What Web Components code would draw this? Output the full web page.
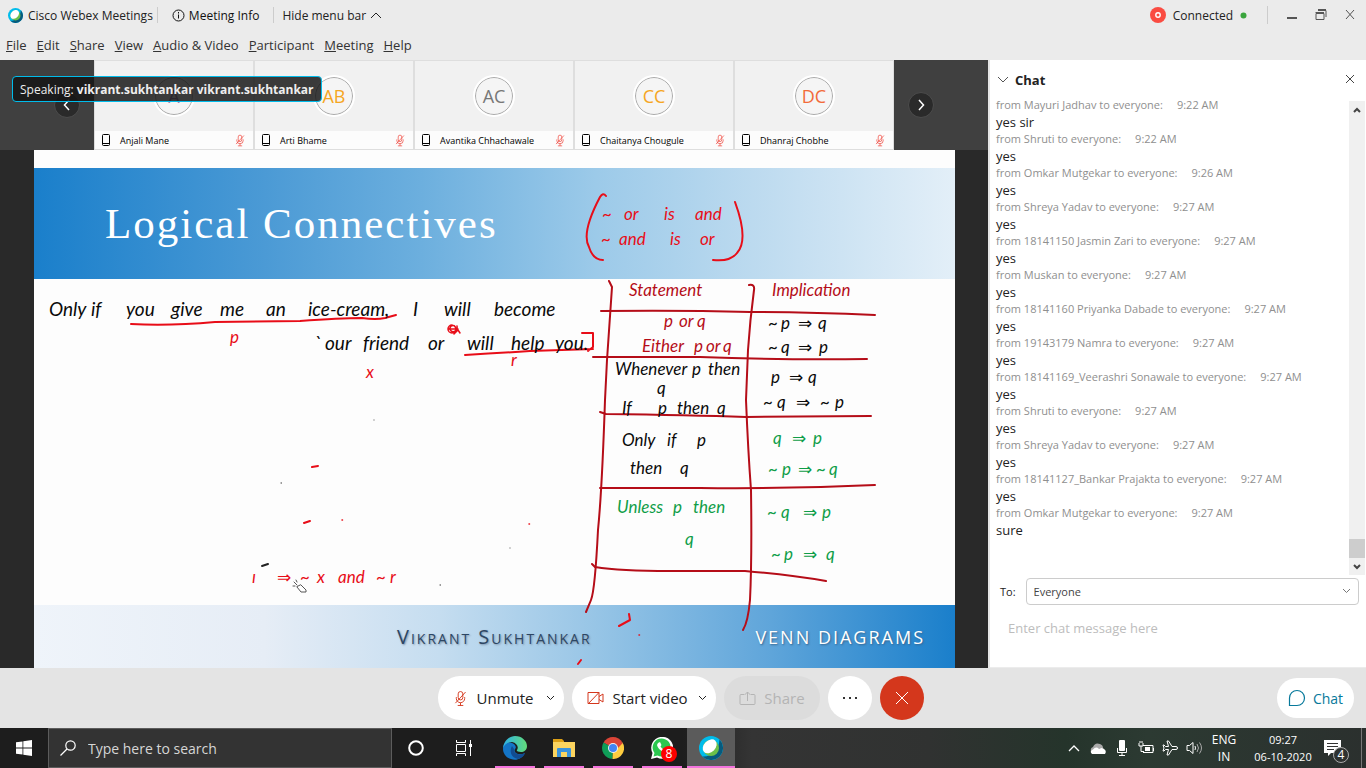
<!DOCTYPE html>
<html lang="en">
<head>
<meta charset="utf-8">
<title>Cisco Webex Meetings</title>
<style>
  html, body { height: 100%; margin: 0; }
  body { font-family: "Open Sans", "Noto Sans", sans-serif; font-size: 12px; color: #222; background: #ebebeb; overflow: hidden; }
</style>
</head>
<body>
<webex-app></webex-app>
<script>
const base = `
  *, *::before, *::after { box-sizing: border-box; }
  button { font: inherit; color: inherit; border: 0; background: none; padding: 0; margin: 0; display: flex; align-items: center; justify-content: center; }
  svg { display: block; flex: none; fill: none; }
  svg:not([stroke]) { stroke: currentColor; }
`;
function define(name, css, html) {
  const tpl = document.createElement('template');
  customElements.define(name, class extends HTMLElement {
    constructor() {
      super();
      const root = this.attachShadow({ mode: 'open' });
      tpl.innerHTML = `<style>${base}${css}</style>` + (typeof html === 'function' ? html(this) : html);
      root.append(tpl.content.cloneNode(true));
    }
  });
}
const micOff = (w, h) => `<svg width="${w}" height="${h}" viewBox="0 0 14 17" aria-hidden="true"><rect x="4.500" y="1" width="5" height="9" rx="2.500"/><path d="M2.500 7v1.500a4.500 4.500 0 0 0 9 0V7M7 13v3M4 16h6M12.500 1.500L1.500 13.500"/></svg>`;
const webexLogo = s => `<svg width="${s}" height="${s}" viewBox="0 0 24 24" stroke="none" aria-hidden="true"><circle cx="12" cy="12" r="12" fill="#00bceb"/><path d="M20.500 3.500A12 12 0 0 1 3.500 20.500C13 21 20 14 20.500 3.500z" fill="#075a7d"/><circle cx="12" cy="12" r="8" fill="#6cc04a"/><ellipse cx="10.700" cy="10.300" rx="8" ry="5.800" transform="rotate(-45 10.700 10.300)" fill="#fff"/></svg>`;

define('title-bar', `
  :host { display: flex; height: 30px; align-items: center; padding: 0 10px 0 8px; background: #ebebeb; }
  .brand, .info, .hide, .status { display: flex; align-items: center; }
  .brand { gap: 5px; padding-right: 4px; }
  .info { gap: 4px; padding: 0 14px; height: 16px; border-left: 1px solid #ccc; border-right: 1px solid #ccc; color: #111; }
  .hide { gap: 4px; padding-left: 8px; }
  .status { margin-left: auto; gap: 7px; padding-right: 20px; }
  .win { display: flex; gap: 16px; border-left: 1px solid #ccc; padding-left: 18px; height: 18px; color: #555; }
`, `
  <div class="brand">${webexLogo(15)}<span>Cisco Webex Meetings</span></div>
  <button class="info"><svg width="13" height="13" viewBox="0 0 13 13"><circle cx="6.500" cy="6.500" r="5.500"/><path d="M6.500 5.500v4M6.500 3v1.500"/></svg>Meeting Info</button>
  <button class="hide">Hide menu bar <svg width="12" height="8" viewBox="0 0 12 8"><path d="M1 7l5-5 5 5"/></svg></button>
  <div class="status"><svg width="16" height="16" viewBox="0 0 16 16" stroke="none"><circle cx="8" cy="8" r="8" fill="#fa4c42"/><circle cx="8" cy="8" r="2.200" stroke="#fff" stroke-width="1.400"/></svg><span>Connected</span><svg width="7" height="7" viewBox="0 0 7 7" stroke="none"><circle cx="3.500" cy="3.500" r="3" fill="#3aa53d"/></svg></div>
  <div class="win">
    <button aria-label="Minimize"><svg width="12" height="12" viewBox="0 0 12 12"><path d="M1 9h10" stroke-width="2"/></svg></button>
    <button aria-label="Restore"><svg width="14" height="12" viewBox="0 0 14 12"><path d="M2 4.500h8v6H2zM2 3v1h8M4 1.500h8V8"/><path d="M2 4h8M4 1h8" stroke-width="2"/></svg></button>
    <button aria-label="Close"><svg width="12" height="12" viewBox="0 0 12 12"><path d="M2 1l8 9M10 1l-8 9"/></svg></button>
  </div>`);

define('menu-bar', `
  :host { display: block; background: #ebebeb; }
  nav { height: 30px; display: flex; align-items: center; gap: 10px; padding: 0 6px; font-size: 13px; color: #333; }
`, `<nav>${['File', 'Edit', 'Share', 'View', 'Audio &amp; Video', 'Participant', 'Meeting', 'Help'].map(t => `<button><span><u>${t[0]}</u>${t.slice(1)}</span></button>`).join('')}</nav>`);

define('participant-tile', `
  :host { display: flex; flex-direction: column; width: 160px; background: #f1f1f1; border: 1px solid #dedede; }
  .face { flex: 1; display: grid; place-items: center; }
  .avatar { width: 38px; height: 38px; border-radius: 50%; border: 1px solid #aaa; outline: 2px solid #fff; background: #f5f5f5; display: grid; place-items: center; font-size: 18px; color: var(--tone); }
  .name { height: 18px; display: flex; align-items: center; gap: 9px; padding: 0 8px 0 6px; background: #fcfcfc; font-size: 9px; color: #000; }
  .mic { margin-left: auto; color: #f0483e; }
`, el => `
  <div class="face"><span class="avatar" style="--tone:${el.getAttribute('tone')}">${el.getAttribute('initials')}</span></div>
  <div class="name"><svg width="10" height="12" viewBox="0 0 10 12"><rect x="1.500" y=".5" width="7" height="11" rx="1"/><path d="M2 9.500h6"/></svg><slot></slot><span class="mic">${micOff(10, 13)}</span></div>`);

define('film-strip', `
  :host { display: flex; height: 90px; background: #404040; position: relative; }
  .side { flex: 1; display: flex; align-items: center; padding: 0 14px; color: #fff; }
  .side.prev { justify-content: flex-end; }
  .side button { width: 26px; height: 26px; border-radius: 50%; border: 1px solid #4c4c4c; background: #2a2a2a; }
  .speaking { position: absolute; left: 12px; top: 16px; height: 26px; display: flex; align-items: center; white-space: pre; padding: 0 7px; border: 1px solid #00bceb; border-radius: 4px; background: rgba(20,20,20,.83); color: #eee; }
  .speaking b { font-weight: 700; }
`, `
  <div class="side prev"><button aria-label="Previous participants"><svg width="8" height="12" viewBox="0 0 8 12"><path d="M6 1L1.500 6 6 11" stroke-width="1.500"/></svg></button></div>
  <participant-tile initials="A" tone="#a47bb0">Anjali Mane</participant-tile>
  <participant-tile initials="AB" tone="#f5a623">Arti Bhame</participant-tile>
  <participant-tile initials="AC" tone="#777">Avantika Chhachawale</participant-tile>
  <participant-tile initials="CC" tone="#f5a623">Chaitanya Chougule</participant-tile>
  <participant-tile initials="DC" tone="#f26b3a">Dhanraj Chobhe</participant-tile>
  <div class="side"><button aria-label="Next participants"><svg width="8" height="12" viewBox="0 0 8 12"><path d="M2 1l4.500 5L2 11" stroke-width="1.500"/></svg></button></div>
  <div class="speaking">Speaking: <b>vikrant.sukhtankar vikrant.sukhtankar</b></div>`);

/* A line of handwriting: [classes, baseline, x1, word1, x2, word2, ...] */
const notes = [
  ['r', 220, 602, '~', 624, 'or', 664, 'is', 695, 'and'],
  ['r', 245, 601, '~', 619, 'and', 670, 'is', 700, 'or'],
  ['k big', 316, 49, 'Only', 91, 'if', 126, 'you', 171, 'give', 220, 'me', 266, 'an', 308, 'ice-cream,', 413, 'I', 444, 'will', 494, 'become'],
  ['r', 343, 230, 'p'],
  ['k big', 350, 314, '`', 325, 'our', 363, 'friend', 428, 'or', 467, 'will', 511, 'help', 555, 'you.'],
  ['r', 366, 511, 'r'],
  ['r', 378, 366, 'x'],
  ['d', 296, 629, 'Statement', 772, 'Implication'],
  ['d', 327, 664, 'p', 679, 'or', 697, 'q'],
  ['d', 352, 642, 'Either', 694, 'p', 706, 'or', 723, 'q'],
  ['k', 329, 768, '~', 781, 'p', 798, '⇒', 818, 'q'],
  ['k', 353, 768, '~', 781, 'q', 798, '⇒', 819, 'p'],
  ['k', 375, 615, 'Whenever', 692, 'p', 708, 'then'],
  ['k', 394, 657, 'q'],
  ['k', 414, 622, 'If', 658, 'p', 677, 'then', 717, 'q'],
  ['k', 383, 771, 'p', 789, '⇒', 808, 'q'],
  ['k', 408, 763, '~', 777, 'q', 796, '⇒', 820, '~', 835, 'p'],
  ['k', 446, 622, 'Only', 667, 'if', 697, 'p'],
  ['k', 474, 630, 'then', 680, 'q'],
  ['g', 444, 773, 'q', 792, '⇒', 813, 'p'],
  ['g', 475, 768, '~', 782, 'p', 798, '⇒', 816, '~', 829, 'q'],
  ['g', 513, 617, 'Unless', 673, 'p', 693, 'then'],
  ['g', 545, 685, 'q'],
  ['g', 518, 767, '~', 781, 'q', 803, '⇒', 822, 'p'],
  ['g', 560, 771, '~', 784, 'p', 803, '⇒', 826, 'q'],
  ['r', 583, 252, 'ı', 277, '⇒', 300, '~', 317, 'x', 338, 'and', 376, '~', 390, 'r']
];
const noteText = notes.map(([c, y, ...w]) => {
  let s = '';
  for (let i = 0; i < w.length; i += 2) s += `<tspan x="${w[i]}">${w[i + 1]}</tspan> `;
  return `<text class="${c}" y="${y}">${s.trim()}</text>`;
}).join('');

define('shared-slide', `
  :host { display: flex; background: #292929; padding: 0 33px 0 34px; }
  .slide { flex: 1; position: relative; display: flex; flex-direction: column; background: #fdfdfd; padding-top: 18px; }
  header { height: 111px; display: flex; align-items: center; padding-left: 71px; background: linear-gradient(90deg, #1a7fcb 0%, #4b9ad5 25%, #6cafde 42%, #9ccae9 61%, #bcdaef 78%, #e3eff8 100%); }
  h1 { margin: 0; font: 43px "Liberation Serif", serif; letter-spacing: 2px; color: #fff; }
  footer { margin-top: auto; height: 63px; display: flex; align-items: center; padding-right: 30px; font-size: 18px; letter-spacing: 2px;
    background: linear-gradient(90deg, #eff4fa 0%, #e6edf6 25%, #c5ddf0 44%, #97c5e6 61%, #5fa5da 80%, #1a7fcb 100%); }
  .author { margin-left: 363px; font-size: 20px; font-variant: small-caps; color: #2d4663; text-shadow: 1px 1px 2px #7d93ab; }
  .topic { margin-left: auto; color: #fff; text-shadow: 1px 1px 2px #37668f; }
  .ink { position: absolute; left: 0; top: 0; width: 100%; height: 100%; stroke-width: 2; stroke-linecap: round; stroke-linejoin: round; }
  .ink text { stroke: none; font: italic 17px Lato, "DejaVu Sans", sans-serif; }
  .ink text.big { font-size: 19px; }
  text.r { fill: #e80d18; } text.k { fill: #0a0a0a; } text.d { fill: #b50d18; } text.g { fill: #0f9d48; }
`, `
  <div class="slide">
    <header><h1>Logical Connectives</h1></header>
    <footer><span class="author">Vikrant Sukhtankar</span><span class="topic">VENN DIAGRAMS</span></footer>
    <svg class="ink" viewBox="34 150 921 518" role="img" aria-label="Handwritten notes">
      <g stroke="#e80d18">
        <path d="M606 196Q603 192 600 197Q581 233 589 247Q593 260 603 260M735 202Q749 240 737 253Q730 262 713 260"/>
        <path d="M131 324Q170 326 215 322L300 321Q340 318 362 318Q376 320 385 318L396 315M465 355Q500 353 530 351L593 349M582 333h11V347L588 351"/>
        <path d="M452 325a4 4 0 1 0 4 4q-1-5-5-3q-3 4 2 6q5-2 4-6M448 329h10M454 334l4-4l2 3" stroke-width="1.500"/>
        <path d="M312 467l6-1M304 523l6-2M619 626L630 620L629 614M578 664l3-4"/>
        <path d="M342 520h.5M529 524h.5M639 635h.5" stroke-width="1.500"/>
      </g>
      <g stroke="#b50d18">
        <path d="M609 281L612 287Q609 330 607 360L605 400Q602 490 598 530Q595 590 591 600L586 612M749 285Q755 284 754 290Q750 320 748 350L746 400Q748 450 751 490Q752 560 750 600Q748 622 743 630"/>
        <path d="M601 311Q680 310 750 312Q810 312 875 315M593 357H700Q780 360 867 359M600 412L606 414Q690 415 746 417L871 416M600 488H700Q790 489 875 485M592 564l3 3Q620 571 670 571H745Q790 575 826 581"/>
      </g>
      <g stroke="#222"><path d="M262 566l6-2"/><path d="M281 483h.5M440 585h.5M510 548h0M374 420h0" stroke-width="1"/>
        <path d="M294 582l3 3M293 586h2M297 582l-1-2M297 587l4 5h5v-2l-5-5z" fill="#fff" stroke="#555" stroke-width="1"/></g>
      ${noteText}
    </svg>
  </div>`);

define('chat-message', `
  :host { display: block; }
  .from { height: 16px; line-height: 16px; font-size: 11px; color: #8f8f8f; white-space: pre; }
  .from time { margin-left: 14px; }
  .text { height: 18px; line-height: 18px; font-size: 13px; color: #222; }
`, el => `<div class="from">from ${el.getAttribute('from')} to everyone:<time>${el.getAttribute('time')}</time></div><div class="text"><slot></slot></div>`);

const log = [['Mayuri Jadhav', '9:22', 'yes sir'], ['Shruti', '9:22'], ['Omkar Mutgekar', '9:26'], ['Shreya Yadav', '9:27'], ['18141150 Jasmin Zari', '9:27'], ['Muskan', '9:27'], ['18141160 Priyanka Dabade', '9:27'], ['19143179 Namra', '9:27'], ['18141169_Veerashri Sonawale', '9:27'], ['Shruti', '9:27'], ['Shreya Yadav', '9:27'], ['18141127_Bankar Prajakta', '9:27'], ['Omkar Mutgekar', '9:27', 'sure']];
define('chat-panel', `
  :host { display: flex; flex-direction: column; width: 378px; background: #fff; border-left: 2px solid #e6e6e6; border-bottom: 1px solid #ececec; }
  header { height: 41px; display: flex; align-items: center; gap: 6px; padding: 0 10px 2px 7px; flex: none; }
  h2 { margin: 0 auto 0 0; font-size: 13px; font-weight: 700; }
  .body { flex: 1; min-height: 0; display: flex; }
  .log { flex: 1; min-height: 0; overflow: hidden; display: flex; flex-direction: column; justify-content: flex-end; padding: 0 0 36px 6px; }
  .bar { width: 16px; margin-right: 1px; background: #f0f0f0; display: flex; flex-direction: column; align-items: stretch; color: #444; }
  .bar button { height: 17px; } .thumb { height: 19px; background: #cdcdcd; margin-top: auto; }
  .to { display: flex; align-items: center; gap: 10px; padding: 3px 7px 0 10px; flex: none; font-size: 11px; }
  .pick { flex: 1; position: relative; display: flex; }
  select { appearance: none; width: 100%; height: 27px; font: inherit; color: #444; background: #fff; border: 1px solid #ccc; border-radius: 4px; padding: 0 7px; }
  .pick svg { position: absolute; right: 8px; top: 10px; color: #777; }
  textarea { border: 0; resize: none; height: 62px; padding: 13px 18px; font: inherit; font-size: 13px; line-height: 20px; outline: 0; flex: none; background: none; }
  textarea::placeholder { color: #bdbdbd; }
`, `
  <header><svg width="12" height="8" viewBox="0 0 12 8"><path d="M1 1l5 5 5-5" stroke="#555"/></svg><h2>Chat</h2><button aria-label="Close chat"><svg width="12" height="12" viewBox="0 0 12 12"><path d="M2 1l8 8M10 1L2 9" stroke="#444"/></svg></button></header>
  <div class="body"><div class="log">${log.map(([f, t, m]) => `<chat-message from="${f}" time="${t} AM">${m || 'yes'}</chat-message>`).join('')}</div>
    <div class="bar"><button aria-label="Scroll up"><svg width="8" height="6" viewBox="0 0 8 6"><path d="M1 5l3-3 3 3" stroke-width="2"/></svg></button><div class="thumb"></div><button aria-label="Scroll down"><svg width="8" height="6" viewBox="0 0 8 6"><path d="M1 1l3 3 3-3" stroke-width="2"/></svg></button></div></div>
  <div class="to"><label for="to">To:</label><div class="pick"><select id="to"><option>Everyone</option></select><svg width="9" height="6" viewBox="0 0 9 6"><path d="M1 1l3.500 3.500L8 1"/></svg></div></div>
  <textarea aria-label="Chat message" placeholder="Enter chat message here"></textarea>`);

define('control-bar', `
  :host { display: grid; grid-template-columns: 1fr auto 1fr; align-items: center; height: 60px; padding: 0 12px 0 8px; background: #e4e4e4; font-size: 15px; color: #222; }
  .group { grid-column: 2; display: flex; gap: 8px; }
  .group button { height: 44px; border-radius: 22px; background: #fff; }
  .mute { width: 126px; gap: 10px; } .video { width: 144px; gap: 8px; }
  .group .mute, .group .video { padding-left: 6px; }
  .mute > svg, .video > svg { margin-left: 2px; }
  .group .share { width: 96px; gap: 8px; background: #dcdcdc; color: #b4b4b4; }
  .round { width: 44px; } .group .leave { background: #d4371c; color: #fff; }
  .red { color: #d4371c; }
  .chat { justify-self: end; width: 77px; height: 40px; border-radius: 20px; background: #fff; color: #07799b; font-size: 14px; gap: 7px; }
`, `
  <div class="group">
    <button class="mute"><span class="red">${micOff(13, 17)}</span>Unmute<svg width="9" height="6" viewBox="0 0 9 6"><path d="M1 1l3.500 3.500L8 1"/></svg></button>
    <button class="video"><span class="red"><svg width="17" height="14" viewBox="0 0 17 14"><path d="M1 1.500h11v11H1zM12 5.500l4-2.500v8l-4-2.500M1 13L12 1.500"/></svg></span>Start video<svg width="9" height="6" viewBox="0 0 9 6"><path d="M1 1l3.500 3.500L8 1"/></svg></button>
    <button class="share" disabled><svg width="17" height="15" viewBox="0 0 17 15"><path d="M5 3.500H2Q1 3.500 1 4.500v8q0 1 1 1h13q1 0 1-1v-8q0-1-1-1h-3M8.500 10V1M5.500 4l3-3 3 3"/></svg>Share</button>
    <button class="round" aria-label="More options"><svg width="16" height="4" viewBox="0 0 16 4" stroke="none"><path fill="#333" d="M1 1h2v2H1zM7 1h2v2H7zM13 1h2v2h-2z"/></svg></button>
    <button class="round leave" aria-label="Leave meeting"><svg width="14" height="14" viewBox="0 0 14 14"><path d="M1 1l12 12M13 1L1 13"/></svg></button>
  </div>
  <button class="chat"><svg width="18" height="18" viewBox="0 0 18 18"><path d="M1.500 16.500V9A7.500 7.500 0 1 1 9 16.500z" stroke-width="1.200"/></svg>Chat</button>`);

define('task-bar', `
  :host { display: flex; height: 40px; color: #fff; background: linear-gradient(90deg, #1d1d1d 0%, #1d1d1d 50%, #343434 55%, #303231 68%, #25342b 78%, #2c3a32 84%, #2b302e 100%); }
  button { width: 48px; height: 40px; position: relative; }
  .search { flex: 0 1 344px; display: flex; align-items: center; gap: 12px; padding: 0 11px; background: #333; border: 1px solid #5c5c5c; }
  input { flex: 1; min-width: 0; border: 0; background: none; outline: 0; font: inherit; font-size: 14px; color: #ddd; padding: 0; }
  input::placeholder { color: #d6d6d6; }
  .apps { display: flex; gap: 1px; margin-left: 3px; }
  .apps button::after { content: ""; position: absolute; left: 4px; right: 4px; bottom: 0; height: 2px; background: #f373dd; }
  .apps .on { background: #5b5b5b; } .apps .on::after { left: 0; right: 0; }
  .badge { position: absolute; right: 9px; top: 18px; width: 16px; height: 16px; border-radius: 50%; background: #f00; font-size: 12px; line-height: 16px; }
  .tray { margin-left: auto; display: flex; align-items: center; }
  .tray button { width: 24px; }
  .tray .lang { width: 36px; } .tray .clock { width: 82px; font-size: 11px; } .lang, .clock { line-height: 17px; text-align: center; }
  .tray .note { width: 33px; justify-content: flex-start; }
  .note .badge { right: 8px; top: 19px; background: #2e3230; border: 1px solid #aaa; line-height: 14px; }
  .peek { width: 5px; height: 40px; border-left: 1px solid #777; margin-left: 4px; }
`, `
  <button aria-label="Start"><svg width="16" height="16" viewBox="0 0 16 16" stroke="none"><path fill="#fff" d="M0 2.300L6.500 1.400v6.200H0zM7.300 1.300L16 0v7.600H7.300zM0 8.400h6.500v6.200L0 13.700zM7.300 8.400H16V16l-8.700-1.300z"/></svg></button>
  <label class="search"><svg width="16" height="16" viewBox="0 0 16 16"><circle cx="10.500" cy="5.500" r="4.700" stroke-width="1.200"/><path d="M7 9L0.500 15.500" stroke-width="1.200"/></svg><input type="text" placeholder="Type here to search" aria-label="Search"></label>
  <button aria-label="Cortana"><svg width="16" height="16" viewBox="0 0 16 16"><circle cx="8" cy="8" r="6.800" stroke-width="2"/></svg></button>
  <button aria-label="Task view"><svg width="18" height="16" viewBox="0 0 18 16"><path d="M1.500 4.500h9v7h-9zM1.500 0v2.500h9V0M1.500 16v-2.500h9V16M15.500 0v16"/><path d="M14 4h3v3h-3z" fill="#fff" stroke="none"/></svg></button>
  <div class="apps">
    <button aria-label="Edge"><svg width="24" height="24" viewBox="0 0 24 24" stroke="none"><defs><linearGradient id="e"><stop stop-color="#2db1e8"/><stop offset="1" stop-color="#62dc7a"/></linearGradient></defs><path fill="#1475c6" d="M0 13C0 7 5 5 9 7c3 1 5 4 3 6-2 4 4 7 10 4-3 6-9 8-14 6-5-1-8-6-8-10z"/><path fill="url(#e)" d="M0 12C1 4 7 0 12 0c7 0 12 5 12 10 0 4-3 6-6 6-3 0-5-1-4-2 2-3 0-7-5-8-5 0-8 3-9 6z"/><path fill="#124c91" d="M9 10c-3 5-1 12 6 13 4-1 6-3 7-6-5 3-12 1-11-4z"/></svg></button>
    <button aria-label="File Explorer"><svg width="22" height="18" viewBox="0 0 22 18" stroke="none"><path fill="#dda016" d="M0 0h9l2 2v4H0z"/><path fill="#fbd45f" d="M0 3h22v15H0z"/><path fill="#3a93dc" d="M4 10q0-1 1-1h12q1 0 1 1v8h-4v-5H8v5H4z"/></svg></button>
    <button aria-label="Chrome"><svg width="22" height="22" viewBox="0 0 22 22" stroke="none"><path fill="#db4437" d="M11 11L1.500 5.500A11 11 0 0 1 20.500 5.500z"/><path fill="#0f9d58" d="M11 11L10.500 22A11 11 0 0 1 1.500 5.500z"/><path fill="#ffcd40" d="M11 11l9.500-5.500A11 11 0 0 1 10.500 22z"/><path fill="#db4437" d="M11 6h9.800L16 11z"/><circle cx="11" cy="11" r="5" fill="#f1f1f1"/><circle cx="11" cy="11" r="4" fill="#4285f4"/></svg></button>
    <button aria-label="WhatsApp"><svg width="22" height="22" viewBox="0 0 22 22" stroke="none"><path fill="#fff" d="M0 22l1.500-6A11 11 0 1 1 6 20.500z"/><path fill="#2bc84f" d="M2.500 19.500l1-3.500A9 9 0 1 1 6.500 18.500z"/><path fill="#fff" d="M7 6l2-1 1.500 3-1 1.500q1 2 3.500 3l1.500-1.500 3 1.500q-1 3.500-4 3Q7 13 6 8z"/></svg><span class="badge">8</span></button>
    <button class="on" aria-label="Webex">${webexLogo(24)}</button>
  </div>
  <div class="tray">
    <button aria-label="Show hidden icons"><svg width="12" height="8" viewBox="0 0 12 8"><path d="M1 7l5-5 5 5" stroke-width="1.300"/></svg></button>
    <button aria-label="OneDrive"><svg width="16" height="11" viewBox="0 0 16 11" stroke="none"><path fill="#aaa" d="M1 8Q0 5 3 4q2-5 7-3 3 1 3 4z"/><path fill="#fff" d="M2 11q-3-3 1-4.500Q6 3 9 6q3-2 5 0 3 2 1 5z"/></svg></button>
    <button aria-label="Microphone"><svg width="12" height="16" viewBox="0 0 12 16"><rect x="3" y="0" width="6" height="11" rx="1" fill="#fff" stroke="none"/><path d="M1.500 8v4.500h9V8M6 12v3M3 15.500h6"/></svg></button>
    <button aria-label="Battery"><svg width="17" height="14" viewBox="0 0 17 14"><path d="M5 4.500h10v7H5M15.500 7v3M1 2v3h4V2M3 5v5.500h3M2 0v2M4 0v2"/><path d="M7 6h5v4H7z" fill="#fff" stroke="none"/></svg></button>
    <button aria-label="Airplane mode"><svg width="16" height="16" viewBox="0 0 16 16"><path d="M15.500 8q0-1.500-1.500-1.500h-4L6.500 1H5l1.500 5.500H3.500L2 5H1l1 3-1 3h1l1.500-1.500h3L5 15h1.500L10 9.500h4Q15.500 9.500 15.500 8z"/></svg></button>
    <button aria-label="Volume"><svg width="17" height="14" viewBox="0 0 17 14"><path d="M1 4.500h2.500L7 1.500v11L3.500 9.500H1zM9 5q1 2 0 4"/><path d="M11 3q3 4 0 8M13.500 1.500q4 5.500 0 11" stroke="#aaa"/></svg></button>
    <button class="lang">ENG<br>IN</button>
    <button class="clock">09:27<br>06-10-2020</button>
    <button class="note" aria-label="4 notifications"><svg width="17" height="17" viewBox="0 0 17 17" stroke="none"><path fill="#fff" d="M0 0h17v13H7l-3 3v-3H0z"/><path stroke="#333" d="M3 3.500h11M3 6.500h11M3 9.500h7"/></svg><span class="badge">4</span></button>
    <div class="peek"></div>
  </div>`);

define('webex-app', `
  :host { display: flex; flex-direction: column; height: 100vh; }
  main { flex: 1; min-height: 0; display: flex; }
  .stage { flex: 1; min-width: 0; display: flex; flex-direction: column; }
  shared-slide { flex: 1; min-height: 0; }
`, `
  <title-bar></title-bar>
  <menu-bar></menu-bar>
  <main><section class="stage"><film-strip></film-strip><shared-slide></shared-slide></section><chat-panel></chat-panel></main>
  <control-bar></control-bar>
  <task-bar></task-bar>`);
</script>
</body>
</html>
